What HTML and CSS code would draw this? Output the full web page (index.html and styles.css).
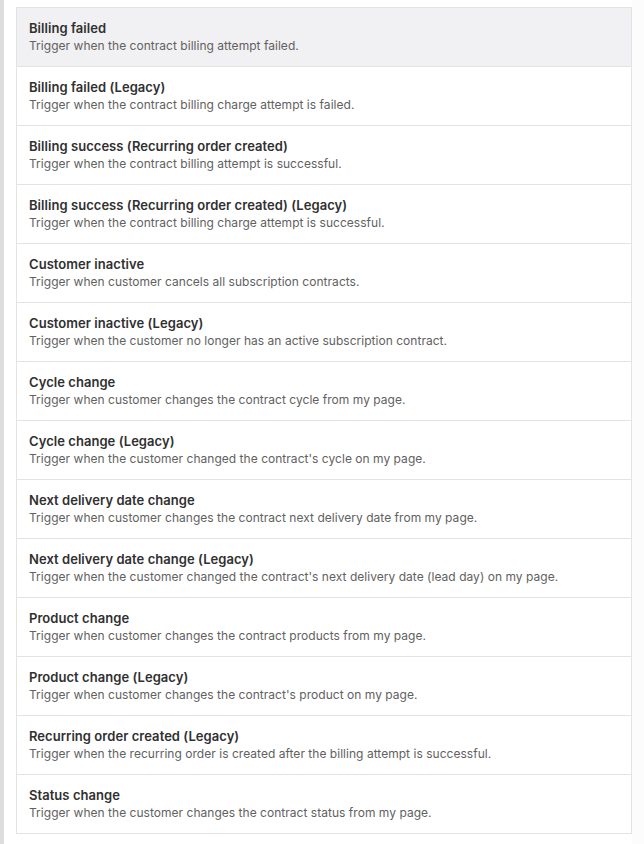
FILE: index.html
```html
<!DOCTYPE html>
<html>
<head>
<meta charset="utf-8">
<link rel="stylesheet" href="styles.css">
</head>
<body>
<div class="page">
  <div class="sidebar-edge"></div>
  <div class="content">
    <ul class="list">
      <li class="item active"><div class="title">Billing failed</div><div class="desc">Trigger when the contract billing attempt failed.</div></li>
      <li class="item"><div class="title">Billing failed (Legacy)</div><div class="desc">Trigger when the contract billing charge attempt is failed.</div></li>
      <li class="item"><div class="title">Billing success (Recurring order created)</div><div class="desc">Trigger when the contract billing attempt is successful.</div></li>
      <li class="item"><div class="title">Billing success (Recurring order created) (Legacy)</div><div class="desc">Trigger when the contract billing charge attempt is successful.</div></li>
      <li class="item"><div class="title">Customer inactive</div><div class="desc">Trigger when customer cancels all subscription contracts.</div></li>
      <li class="item"><div class="title">Customer inactive (Legacy)</div><div class="desc">Trigger when the customer no longer has an active subscription contract.</div></li>
      <li class="item"><div class="title">Cycle change</div><div class="desc">Trigger when customer changes the contract cycle from my page.</div></li>
      <li class="item"><div class="title">Cycle change (Legacy)</div><div class="desc">Trigger when the customer changed the contract's cycle on my page.</div></li>
      <li class="item"><div class="title">Next delivery date change</div><div class="desc">Trigger when customer changes the contract next delivery date from my page.</div></li>
      <li class="item"><div class="title">Next delivery date change (Legacy)</div><div class="desc">Trigger when the customer changed the contract's next delivery date (lead day) on my page.</div></li>
      <li class="item"><div class="title">Product change</div><div class="desc">Trigger when customer changes the contract products from my page.</div></li>
      <li class="item"><div class="title">Product change (Legacy)</div><div class="desc">Trigger when customer changes the contract's product on my page.</div></li>
      <li class="item"><div class="title">Recurring order created (Legacy)</div><div class="desc">Trigger when the recurring order is created after the billing attempt is successful.</div></li>
      <li class="item"><div class="title">Status change</div><div class="desc">Trigger when the customer changes the contract status from my page.</div></li>
    </ul>
  </div>
</div>
</body>
</html>
```
FILE: styles.css
```css
html, body {
  margin: 0;
  padding: 0;
  background: #fdfcfd;
  font-family: Inter, "Noto Sans", sans-serif;
}
.page {
  display: flex;
  min-height: 844px;
}
.sidebar-edge {
  width: 4px;
  background: #dedcdf;
  flex: none;
}
.content {
  width: 628px;
  background: #ffffff;
  padding: 7px 0 0 12px;
  box-sizing: border-box;
}
.list {
  list-style: none;
  margin: 0;
  padding: 0;
  width: 616px;
  border: 1px solid #e3e3e3;
  box-sizing: border-box;
}
.item {
  height: 59px;
  box-sizing: border-box;
  padding: 10px 12px 0 12px;
  border-top: 1px solid #e3e3e3;
  background: #ffffff;
}
.item:first-child {
  border-top: none;
  height: 58px;
}
.item.active {
  background: #f1f0f2;
}
.title {
  font-size: 13px;
  line-height: 20px;
  font-weight: 600;
  color: #303030;
  letter-spacing: 0.05px;
}
.desc {
  font-size: 12px;
  line-height: 16px;
  color: #616161;
  letter-spacing: 0.03px;
}
```
